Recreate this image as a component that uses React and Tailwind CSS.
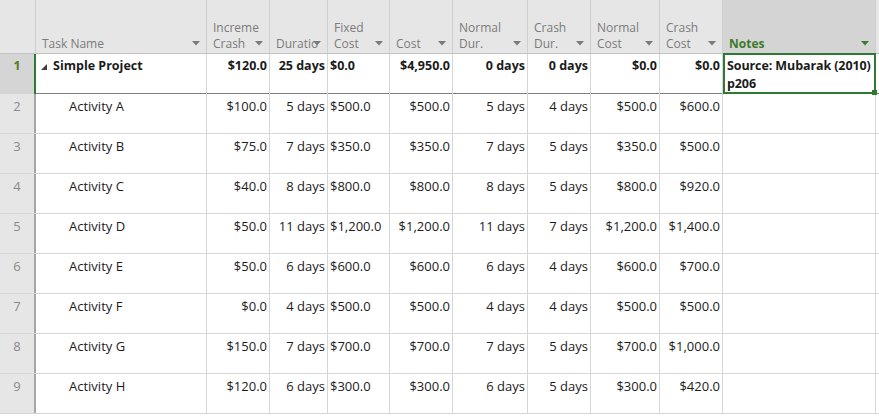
import React from 'react';

const cols = [
  { key: 'name', label: ['', 'Task Name'] },
  { key: 'inc', label: ['Increme', 'Crash'], align: 'right' },
  { key: 'dur', label: ['', 'Duratio'], align: 'right' },
  { key: 'fixed', label: ['Fixed', 'Cost'], align: 'left' },
  { key: 'cost', label: ['', 'Cost'], align: 'right' },
  { key: 'ndur', label: ['Normal', 'Dur.'], align: 'right' },
  { key: 'cdur', label: ['Crash', 'Dur.'], align: 'right' },
  { key: 'ncost', label: ['Normal', 'Cost'], align: 'right' },
  { key: 'ccost', label: ['Crash', 'Cost'], align: 'right' },
];

const rows = [
  ['Simple Project', '$120.0', '25 days', '$0.0', '$4,950.0', '0 days', '0 days', '$0.0', '$0.0'],
  ['Activity A', '$100.0', '5 days', '$500.0', '$500.0', '5 days', '4 days', '$500.0', '$600.0'],
  ['Activity B', '$75.0', '7 days', '$350.0', '$350.0', '7 days', '5 days', '$350.0', '$500.0'],
  ['Activity C', '$40.0', '8 days', '$800.0', '$800.0', '8 days', '5 days', '$800.0', '$920.0'],
  ['Activity D', '$50.0', '11 days', '$1,200.0', '$1,200.0', '11 days', '7 days', '$1,200.0', '$1,400.0'],
  ['Activity E', '$50.0', '6 days', '$600.0', '$600.0', '6 days', '4 days', '$600.0', '$700.0'],
  ['Activity F', '$0.0', '4 days', '$500.0', '$500.0', '4 days', '4 days', '$500.0', '$500.0'],
  ['Activity G', '$150.0', '7 days', '$700.0', '$700.0', '7 days', '5 days', '$700.0', '$1,000.0'],
  ['Activity H', '$120.0', '6 days', '$300.0', '$300.0', '6 days', '5 days', '$300.0', '$420.0'],
];

const grid = 'grid grid-cols-[36px_171px_63px_58px_62px_63px_75px_63px_69px_63px_153px_1fr]';

function Arrow({ green }) {
  return (
    <svg width="8" height="5" viewBox="0 0 8 5" className="absolute right-[6px] bottom-[7px]">
      <polygon points="0,0 8,0 4,4.5" fill={green ? '#3d7a2b' : '#7a7a7a'} />
    </svg>
  );
}

export default function App() {
  return (
    <div
      className="w-[879px] h-[416px] overflow-hidden bg-white text-[13px] text-[#1b1b1b]"
      style={{ fontFamily: '"Open Sans", "Noto Sans", sans-serif' }}
    >
      {/* header */}
      <div className={`${grid} h-[54px] bg-[#e6e6e6] border-b border-[#c2c2c2] text-[#7b7b7b] text-[12px] leading-4`}>
        <div className="border-r border-[#cfcfcf]" />
        {cols.map(c => (
          <div key={c.key} className="relative border-r border-[#cfcfcf] flex flex-col justify-end pl-[6px] pb-[1px] pr-[14px] overflow-hidden whitespace-nowrap">
            {c.label[0] && <div>{c.label[0]}</div>}
            <div>{c.label[1]}</div>
            <Arrow />
          </div>
        ))}
        <div className="relative bg-[#d4d4d4] border-r border-[#cfcfcf] flex flex-col justify-end pl-[6px] pb-[1px] font-bold text-[#3d7a2b]">
          <div>Notes</div>
          <Arrow green />
        </div>
        <div />
      </div>

      {/* body */}
      {rows.map((r, i) => {
        const first = i === 0;
        return (
          <div
            key={i}
            className={`${grid} h-[40px] leading-[18px] border-b ${first ? 'border-[#7f7f7f] font-bold text-[12.5px]' : 'border-[#d6d6d6]'}`}
          >
            <div className={`flex justify-center pt-[3px] border-r-2 ${first ? 'bg-[#d5d5d5] border-[#2f7a32] text-[#5c7a1f]' : 'bg-[#e6e6e6] border-[#a6a6a6] text-[#8a8a8a] font-normal'}`}>
              {i + 1}
            </div>
            <div className={`border-r border-[#d6d6d6] pt-[3px] whitespace-nowrap flex items-start ${first ? 'pl-[5px]' : 'pl-[33px]'}`}>
              {first && (
                <svg width="6" height="6" viewBox="0 0 6 6" className="mt-[7px] mr-[6px]">
                  <polygon points="6,0 6,6 0,6" fill="#404040" />
                </svg>
              )}
              {r[0]}
            </div>
            {r.slice(1).map((v, j) => (
              <div
                key={j}
                className={`border-r border-[#d6d6d6] pt-[3px] whitespace-nowrap overflow-hidden ${cols[j + 1].align === 'left' ? 'text-left pl-[2px]' : 'text-right pr-[2px]'}`}
              >
                {v}
              </div>
            ))}
            {first ? (
              <div className="relative -mt-px h-[41px] border-2 border-[#2f7a32] pl-[2px] pt-[2px] leading-[18px] tracking-[-0.1px]">
                Source: Mubarak (2010) p206
                <div className="absolute -right-[3px] -bottom-[3px] w-[5px] h-[5px] bg-[#2f7a32]" />
              </div>
            ) : (
              <div className="border-r border-[#d6d6d6]" />
            )}
            <div />
          </div>
        );
      })}
    </div>
  );
}
